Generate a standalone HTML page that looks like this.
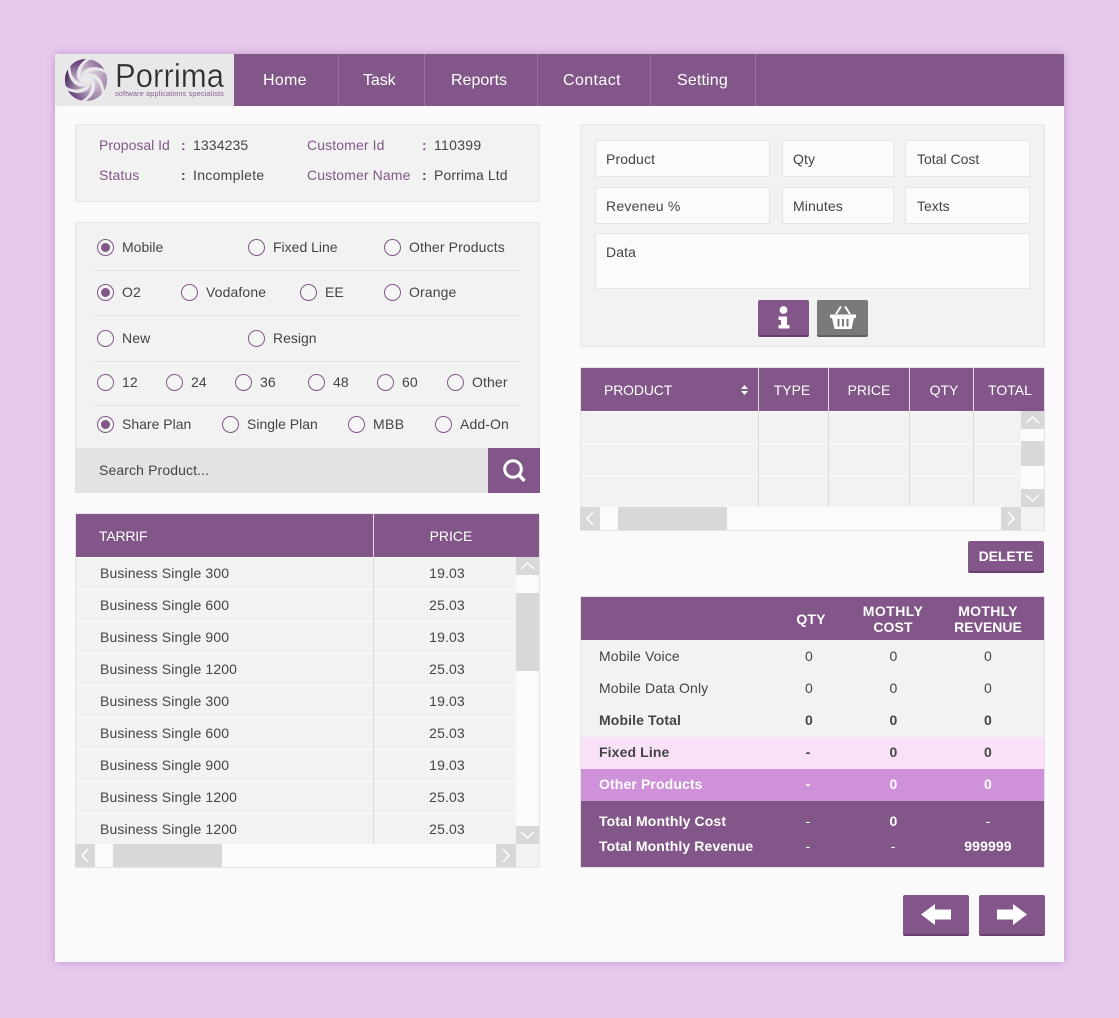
<!DOCTYPE html>
<html><head><meta charset="utf-8"><style>
html,body{margin:0;padding:0}
body{width:1119px;height:1018px;background:#e8c9ee;position:relative;overflow:hidden;font-family:"Liberation Sans",sans-serif;font-size:14px;letter-spacing:.12px;color:#444}
div{position:absolute;box-sizing:border-box}
.t{height:20px;line-height:20px;white-space:nowrap}
.c{height:20px;line-height:20px;white-space:nowrap;width:120px;text-align:center}
.p{color:#825688}
.w{color:#fff}
.b{font-weight:bold}
.n{top:71px;color:#fff;font-size:16px}
.z{letter-spacing:0}
.panel{background:#f2f2f2;border:1px solid #e5e5e5}
.r{width:17px;height:17px;border:1px solid #825688;border-radius:50%;background:#f5f5f5}
.r.on:after{content:"";position:absolute;left:3px;top:3px;width:9px;height:9px;border-radius:50%;background:#825688}
.sep{height:1px;background:#e4e4e4;left:93px;width:427px}
.h{background:#825688}
.s{background:#d8d8d8}
.in{background:#fbfbfb;border:1px solid #e4e4e4;border-radius:2px}
.btn{background:#825688;border-bottom:2px solid #66416c;border-radius:2px}
.rw{background:#f2f2f2;height:31px}
svg{position:absolute;display:block}
</style></head><body>
<div style="left:55px;top:54px;width:1009px;height:908px;background:#fafafa;box-shadow:0 0 8px rgba(110,60,120,.35)"></div>

<!-- nav -->
<div class="h" style="left:55px;top:54px;width:1009px;height:52px"></div>
<div style="left:55px;top:54px;width:179px;height:52px;background:#e8e8e8"></div>
<svg style="left:60px;top:54px" width="170" height="52" viewBox="0 0 170 52">
<defs>
<linearGradient id="g0" gradientUnits="userSpaceOnUse" x1="-14" y1="16" x2="5" y2="3"><stop offset="0" stop-color="#64407a"/><stop offset="1" stop-color="#d8c8dd"/></linearGradient>
<linearGradient id="g1" gradientUnits="userSpaceOnUse" x1="-14" y1="16" x2="5" y2="3"><stop offset="0" stop-color="#4a2b5e"/><stop offset="1" stop-color="#cdbbd4"/></linearGradient>
<linearGradient id="g2" gradientUnits="userSpaceOnUse" x1="-14" y1="16" x2="5" y2="3"><stop offset="0" stop-color="#5e3670"/><stop offset="1" stop-color="#d2c2d8"/></linearGradient>
<linearGradient id="g3" gradientUnits="userSpaceOnUse" x1="-14" y1="16" x2="5" y2="3"><stop offset="0" stop-color="#8c6a98"/><stop offset="1" stop-color="#dfd3e3"/></linearGradient>
<linearGradient id="g4" gradientUnits="userSpaceOnUse" x1="-14" y1="16" x2="5" y2="3"><stop offset="0" stop-color="#a58aae"/><stop offset="1" stop-color="#e4dbe7"/></linearGradient>
<linearGradient id="g5" gradientUnits="userSpaceOnUse" x1="-14" y1="16" x2="5" y2="3"><stop offset="0" stop-color="#9a7ba6"/><stop offset="1" stop-color="#e4dbe7"/></linearGradient>
</defs>
<g transform="translate(26 26)">
<path d="M4 0C7 9-4 17-18.190 10.500A21 21 0 0 0-4.370 20.540C3 17 8 8 4 0Z" fill="url(#g0)"/>
<path d="M4 0C7 9-4 17-18.190 10.500A21 21 0 0 0-4.370 20.540C3 17 8 8 4 0Z" fill="url(#g1)" transform="rotate(60)"/>
<path d="M4 0C7 9-4 17-18.190 10.500A21 21 0 0 0-4.370 20.540C3 17 8 8 4 0Z" fill="url(#g2)" transform="rotate(120)"/>
<path d="M4 0C7 9-4 17-18.190 10.500A21 21 0 0 0-4.370 20.540C3 17 8 8 4 0Z" fill="url(#g3)" transform="rotate(180)"/>
<path d="M4 0C7 9-4 17-18.190 10.500A21 21 0 0 0-4.370 20.540C3 17 8 8 4 0Z" fill="url(#g4)" transform="rotate(240)"/>
<path d="M4 0C7 9-4 17-18.190 10.500A21 21 0 0 0-4.370 20.540C3 17 8 8 4 0Z" fill="url(#g5)" transform="rotate(300)"/>
</g>
<text x="55" y="33" font-family="Liberation Sans" font-size="33" fill="#2f2f2f" stroke="#e8e8e8" stroke-width=".35" textLength="109" lengthAdjust="spacingAndGlyphs">Porrima</text>
<text x="55" y="42" font-family="Liberation Sans" font-size="7.500" fill="#8a5c96" textLength="109" lengthAdjust="spacingAndGlyphs">software applications specialists</text>
</svg>
<div class="t n" style="left:263px;letter-spacing:.3px">Home</div>
<div class="t n" style="left:363px;letter-spacing:-.1px">Task</div>
<div class="t n" style="left:451px;letter-spacing:0">Reports</div>
<div class="t n" style="left:563px;letter-spacing:.4px">Contact</div>
<div class="t n" style="left:677px;letter-spacing:.15px">Setting</div>
<div style="left:338px;top:54px;width:1px;height:52px;background:#9a749f"></div>
<div style="left:424px;top:54px;width:1px;height:52px;background:#9a749f"></div>
<div style="left:537px;top:54px;width:1px;height:52px;background:#9a749f"></div>
<div style="left:650px;top:54px;width:1px;height:52px;background:#9a749f"></div>
<div style="left:755px;top:54px;width:1px;height:52px;background:#9a749f"></div>

<!-- info panel -->
<div class="panel" style="left:75px;top:124px;width:465px;height:78px"></div>
<div class="t p z" style="left:99px;top:135px">Proposal Id</div>
<div class="t p b" style="left:181px;top:135px">:</div>
<div class="t" style="left:193px;top:135px">1334235</div>
<div class="t p" style="left:307px;top:135px">Customer Id</div>
<div class="t p b" style="left:422px;top:135px">:</div>
<div class="t" style="left:434px;top:135px;letter-spacing:.3px">110399</div>
<div class="t p" style="left:99px;top:165px">Status</div>
<div class="t b" style="left:181px;top:165px">:</div>
<div class="t" style="left:193px;top:165px;letter-spacing:.3px">Incomplete</div>
<div class="t p" style="left:307px;top:165px">Customer Name</div>
<div class="t b" style="left:422px;top:165px">:</div>
<div class="t" style="left:434px;top:165px">Porrima Ltd</div>

<!-- options panel -->
<div class="panel" style="left:75px;top:222px;width:465px;height:271px"></div>
<div class="sep" style="top:270px"></div>
<div class="sep" style="top:315px"></div>
<div class="sep" style="top:361px"></div>
<div class="sep" style="top:405px"></div>

<div class="r on" style="left:97px;top:239px"></div><div class="t z" style="left:122px;top:237px">Mobile</div>
<div class="r" style="left:248px;top:239px"></div><div class="t z" style="left:273px;top:237px">Fixed Line</div>
<div class="r" style="left:384px;top:239px"></div><div class="t" style="left:409px;top:237px">Other Products</div>

<div class="r on" style="left:97px;top:284px"></div><div class="t" style="left:122px;top:282px">O2</div>
<div class="r" style="left:181px;top:284px"></div><div class="t" style="left:206px;top:282px">Vodafone</div>
<div class="r" style="left:300px;top:284px"></div><div class="t z" style="left:325px;top:282px">EE</div>
<div class="r" style="left:384px;top:284px"></div><div class="t" style="left:409px;top:282px">Orange</div>

<div class="r" style="left:97px;top:330px"></div><div class="t" style="left:122px;top:328px">New</div>
<div class="r" style="left:248px;top:330px"></div><div class="t z" style="left:273px;top:328px">Resign</div>

<div class="r" style="left:97px;top:374px"></div><div class="t" style="left:122px;top:372px">12</div>
<div class="r" style="left:166px;top:374px"></div><div class="t" style="left:191px;top:372px">24</div>
<div class="r" style="left:235px;top:374px"></div><div class="t" style="left:260px;top:372px">36</div>
<div class="r" style="left:308px;top:374px"></div><div class="t" style="left:333px;top:372px">48</div>
<div class="r" style="left:377px;top:374px"></div><div class="t" style="left:402px;top:372px">60</div>
<div class="r" style="left:447px;top:374px"></div><div class="t" style="left:472px;top:372px">Other</div>

<div class="r on" style="left:97px;top:416px"></div><div class="t z" style="left:122px;top:414px">Share Plan</div>
<div class="r" style="left:222px;top:416px"></div><div class="t z" style="left:247px;top:414px">Single Plan</div>
<div class="r" style="left:348px;top:416px"></div><div class="t" style="left:373px;top:414px;letter-spacing:.4px">MBB</div>
<div class="r" style="left:435px;top:416px"></div><div class="t" style="left:460px;top:414px">Add-On</div>

<div style="left:75px;top:448px;width:465px;height:45px;background:#e3e3e3"></div>
<div class="t" style="left:99px;top:460px">Search Product...</div>
<div class="h" style="left:488px;top:448px;width:52px;height:45px"></div>
<svg style="left:488px;top:448px" width="52" height="45"><circle cx="25" cy="21" r="8.300" fill="none" stroke="#fff" stroke-width="3"/><path d="M30.500 26.500L36.500 33" stroke="#fff" stroke-width="3.500"/></svg>

<!-- tarrif table -->
<div style="left:75px;top:513px;width:465px;height:355px;border:1px solid #e5e5e5;background:#fbfbfb"></div>
<div class="h" style="left:76px;top:514px;width:463px;height:43px"></div>
<div style="left:373px;top:514px;width:1px;height:43px;background:#e4d8e6"></div>
<div class="t w" style="left:99px;top:526px;letter-spacing:-.2px">TARRIF</div>
<div class="c w z" style="left:391px;top:526px">PRICE</div>
<div class="rw" style="left:76px;top:558px;width:440px"></div>
<div class="rw" style="left:76px;top:590px;width:440px"></div>
<div class="rw" style="left:76px;top:622px;width:440px"></div>
<div class="rw" style="left:76px;top:654px;width:440px"></div>
<div class="rw" style="left:76px;top:686px;width:440px"></div>
<div class="rw" style="left:76px;top:718px;width:440px"></div>
<div class="rw" style="left:76px;top:750px;width:440px"></div>
<div class="rw" style="left:76px;top:782px;width:440px"></div>
<div class="rw" style="left:76px;top:814px;width:440px;height:30px"></div>
<div style="left:373px;top:557px;width:1px;height:287px;background:#dcdcdc"></div>
<div class="t" style="left:100px;top:563px">Business Single 300</div><div class="c" style="left:387px;top:563px">19.03</div>
<div class="t" style="left:100px;top:595px">Business Single 600</div><div class="c" style="left:387px;top:595px">25.03</div>
<div class="t" style="left:100px;top:627px">Business Single 900</div><div class="c" style="left:387px;top:627px">19.03</div>
<div class="t" style="left:100px;top:659px">Business Single 1200</div><div class="c" style="left:387px;top:659px">25.03</div>
<div class="t" style="left:100px;top:691px">Business Single 300</div><div class="c" style="left:387px;top:691px">19.03</div>
<div class="t" style="left:100px;top:723px">Business Single 600</div><div class="c" style="left:387px;top:723px">25.03</div>
<div class="t" style="left:100px;top:755px">Business Single 900</div><div class="c" style="left:387px;top:755px">19.03</div>
<div class="t" style="left:100px;top:787px">Business Single 1200</div><div class="c" style="left:387px;top:787px">25.03</div>
<div class="t" style="left:100px;top:819px">Business Single 1200</div><div class="c" style="left:387px;top:819px">25.03</div>
<div class="s" style="left:516px;top:557px;width:23px;height:18px"></div>
<svg style="left:516px;top:557px" width="23" height="18"><path d="M5 12L11.500 6L18 12" fill="none" stroke="#fff" stroke-width="1.500"/></svg>
<div class="s" style="left:516px;top:593px;width:23px;height:78px"></div>
<div class="s" style="left:516px;top:826px;width:23px;height:18px"></div>
<svg style="left:516px;top:826px" width="23" height="18"><path d="M5 6L11.500 12L18 6" fill="none" stroke="#fff" stroke-width="1.500"/></svg>
<div class="s" style="left:75px;top:844px;width:20px;height:23px"></div>
<svg style="left:75px;top:844px" width="20" height="23"><path d="M13 5L7 11.500L13 18" fill="none" stroke="#fff" stroke-width="1.500"/></svg>
<div class="s" style="left:113px;top:844px;width:109px;height:23px"></div>
<div class="s" style="left:496px;top:844px;width:20px;height:23px"></div>
<svg style="left:496px;top:844px" width="20" height="23"><path d="M7 5L13 11.500L7 18" fill="none" stroke="#fff" stroke-width="1.500"/></svg>
<div style="left:516px;top:844px;width:23px;height:23px;background:#f2f2f2"></div>

<!-- form panel -->
<div class="panel" style="left:580px;top:124px;width:465px;height:223px"></div>
<div class="in" style="left:595px;top:140px;width:175px;height:37px"></div><div class="t" style="left:606px;top:149px">Product</div>
<div class="in" style="left:782px;top:140px;width:112px;height:37px"></div><div class="t" style="left:793px;top:149px">Qty</div>
<div class="in" style="left:905px;top:140px;width:125px;height:37px"></div><div class="t z" style="left:917px;top:149px">Total Cost</div>
<div class="in" style="left:595px;top:187px;width:175px;height:37px"></div><div class="t" style="left:606px;top:196px;letter-spacing:.25px">Reveneu %</div>
<div class="in" style="left:782px;top:187px;width:112px;height:37px"></div><div class="t" style="left:793px;top:196px">Minutes</div>
<div class="in" style="left:905px;top:187px;width:125px;height:37px"></div><div class="t z" style="left:917px;top:196px">Texts</div>
<div class="in" style="left:595px;top:233px;width:435px;height:56px"></div><div class="t" style="left:606px;top:242px">Data</div>
<div class="btn" style="left:758px;top:300px;width:51px;height:37px"></div>
<svg style="left:758px;top:300px" width="51" height="35"><circle cx="25.500" cy="10" r="3.900" fill="#fff"/><path d="M20.500 16.500H29V25H31.500V28.500H20.500V25H23V20H20.500Z" fill="#fff"/></svg>
<div class="btn" style="left:817px;top:300px;width:51px;height:37px;background:#7a7a7a;border-bottom-color:#5f5f5f"></div>
<svg style="left:817px;top:300px" width="51" height="35"><path d="M13 14.500H39V18H37L34.500 29H17.500L15 18H13Z" fill="#fff"/><path d="M19 14L24 6.500M33 14L28 6.500" stroke="#fff" stroke-width="2" fill="none"/><path d="M21.500 19V26.500M26 19V26.500M30.500 19V26.500" stroke="#7a7a7a" stroke-width="2"/></svg>

<!-- product table -->
<div style="left:580px;top:367px;width:465px;height:164px;border:1px solid #e5e5e5;background:#fbfbfb"></div>
<div class="h" style="left:581px;top:368px;width:463px;height:43px"></div>
<div class="t w" style="left:604px;top:380px;letter-spacing:-.15px">PRODUCT</div>
<svg style="left:740px;top:385px" width="9" height="10"><path d="M4.500 0L8 4H1ZM4.500 10L1 6H8Z" fill="#fff"/></svg>
<div class="c w z" style="left:732px;top:380px">TYPE</div>
<div class="c w z" style="left:809px;top:380px">PRICE</div>
<div class="c w z" style="left:884px;top:380px">QTY</div>
<div class="c w z" style="left:950px;top:380px">TOTAL</div>
<div class="rw" style="left:581px;top:412px;width:440px"></div>
<div class="rw" style="left:581px;top:444px;width:440px"></div>
<div class="rw" style="left:581px;top:476px;width:440px"></div>
<div style="left:758px;top:368px;width:1px;height:43px;background:#e4d8e6"></div>
<div style="left:828px;top:368px;width:1px;height:43px;background:#e4d8e6"></div>
<div style="left:909px;top:368px;width:1px;height:43px;background:#e4d8e6"></div>
<div style="left:973px;top:368px;width:1px;height:43px;background:#e4d8e6"></div>
<div style="left:758px;top:411px;width:1px;height:96px;background:#dcdcdc"></div>
<div style="left:828px;top:411px;width:1px;height:96px;background:#dcdcdc"></div>
<div style="left:909px;top:411px;width:1px;height:96px;background:#dcdcdc"></div>
<div style="left:973px;top:411px;width:1px;height:96px;background:#dcdcdc"></div>
<div class="s" style="left:1021px;top:411px;width:23px;height:18px"></div>
<svg style="left:1021px;top:411px" width="23" height="18"><path d="M5 12L11.500 6L18 12" fill="none" stroke="#fff" stroke-width="1.500"/></svg>
<div class="s" style="left:1021px;top:441px;width:23px;height:25px"></div>
<div class="s" style="left:1021px;top:489px;width:23px;height:18px"></div>
<svg style="left:1021px;top:489px" width="23" height="18"><path d="M5 6L11.500 12L18 6" fill="none" stroke="#fff" stroke-width="1.500"/></svg>
<div class="s" style="left:580px;top:507px;width:20px;height:23px"></div>
<svg style="left:580px;top:507px" width="20" height="23"><path d="M13 5L7 11.500L13 18" fill="none" stroke="#fff" stroke-width="1.500"/></svg>
<div class="s" style="left:618px;top:507px;width:109px;height:23px"></div>
<div class="s" style="left:1001px;top:507px;width:20px;height:23px"></div>
<svg style="left:1001px;top:507px" width="20" height="23"><path d="M7 5L13 11.500L7 18" fill="none" stroke="#fff" stroke-width="1.500"/></svg>
<div style="left:1021px;top:507px;width:23px;height:23px;background:#f2f2f2"></div>

<div class="btn" style="left:968px;top:541px;width:76px;height:32px"></div>
<div class="c w b" style="left:946px;top:546px;letter-spacing:-.1px">DELETE</div>

<!-- summary table -->
<div style="left:580px;top:596px;width:465px;height:272px;border:1px solid #e5e5e5;background:#f2f2f2"></div>
<div class="h" style="left:581px;top:597px;width:463px;height:43px"></div>
<div style="left:581px;top:737px;width:463px;height:32px;background:#f9e2f7"></div>
<div style="left:581px;top:769px;width:463px;height:32px;background:#cf91da"></div>
<div class="h" style="left:581px;top:801px;width:463px;height:66px"></div>
<div class="c w b" style="left:751px;top:609px">QTY</div>
<div class="c w b" style="left:833px;top:601px;letter-spacing:.45px">MOTHLY</div>
<div class="c w b" style="left:833px;top:617px">COST</div>
<div class="c w b" style="left:928px;top:601px;letter-spacing:.3px">MOTHLY</div>
<div class="c w b z" style="left:928px;top:617px">REVENUE</div>

<div class="t" style="left:599px;top:646px">Mobile Voice</div><div class="c" style="left:749px;top:646px">0</div><div class="c" style="left:833.500px;top:646px">0</div><div class="c" style="left:928px;top:646px">0</div>
<div class="t" style="left:599px;top:678px">Mobile Data Only</div><div class="c" style="left:749px;top:678px">0</div><div class="c" style="left:833.500px;top:678px">0</div><div class="c" style="left:928px;top:678px">0</div>
<div class="t b" style="left:599px;top:710px">Mobile Total</div><div class="c b" style="left:749px;top:710px">0</div><div class="c b" style="left:833.500px;top:710px">0</div><div class="c b" style="left:928px;top:710px">0</div>
<div class="t b" style="left:599px;top:742px">Fixed Line</div><div class="c b" style="left:748px;top:742px">-</div><div class="c b" style="left:833.500px;top:742px">0</div><div class="c b" style="left:928px;top:742px">0</div>
<div class="t b w" style="left:599px;top:774px">Other Products</div><div class="c b w" style="left:748px;top:774px">-</div><div class="c b w" style="left:833.500px;top:774px">0</div><div class="c b w" style="left:928px;top:774px">0</div>
<div class="t b w" style="left:599px;top:811px">Total Monthly Cost</div><div class="c w" style="left:748px;top:811px">-</div><div class="c b w" style="left:833.500px;top:811px">0</div><div class="c w" style="left:928px;top:811px">-</div>
<div class="t b w" style="left:599px;top:836px;letter-spacing:.1px">Total Monthly Revenue</div><div class="c w" style="left:748px;top:836px">-</div><div class="c w" style="left:833px;top:836px">-</div><div class="c b w" style="left:928px;top:836px">999999</div>

<!-- arrows -->
<div class="btn" style="left:903px;top:895px;width:66px;height:41px"></div>
<svg style="left:903px;top:895px" width="66" height="39"><path d="M18 19.500L32 9V14.500H48V24.500H32V30Z" fill="#fff"/></svg>
<div class="btn" style="left:979px;top:895px;width:66px;height:41px"></div>
<svg style="left:979px;top:895px" width="66" height="39"><path d="M48 19.500L34 9V14.500H18V24.500H34V30Z" fill="#fff"/></svg>
</body></html>
